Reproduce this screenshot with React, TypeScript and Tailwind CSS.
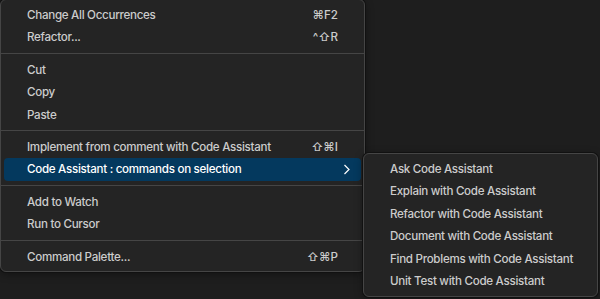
import React from "react"

type Item = { label: string; keys?: string; sub?: boolean; active?: boolean } | "sep"

const mainItems: Item[] = [
  { label: "Change All Occurrences", keys: "⌘F2" },
  { label: "Refactor...", keys: "^⇧R" },
  "sep",
  { label: "Cut" },
  { label: "Copy" },
  { label: "Paste" },
  "sep",
  { label: "Implement from comment with Code Assistant", keys: "⇧⌘I" },
  { label: "Code Assistant : commands on selection", sub: true, active: true },
  "sep",
  { label: "Add to Watch" },
  { label: "Run to Cursor" },
  "sep",
  { label: "Command Palette...", keys: "⇧⌘P" },
]

const subItems = [
  "Ask Code Assistant",
  "Explain with Code Assistant",
  "Refactor with Code Assistant",
  "Document with Code Assistant",
  "Find Problems with Code Assistant",
  "Unit Test with Code Assistant",
]

function Row({ item }: { item: Exclude<Item, "sep"> }) {
  return (
    <div
      className={
        "flex items-center h-[22.4px] px-[23px] rounded-[4px] " +
        (item.active ? "bg-[#04395e] text-white" : "text-[#cccccc]")
      }
    >
      <span className="flex-1 whitespace-nowrap pt-[1px]">{item.label}</span>
      {item.keys && <span className="whitespace-nowrap tracking-normal pt-[1px]">{item.keys}</span>}
      {item.sub && (
        <svg width="8" height="11" viewBox="0 0 8 11" className="mr-[-13px]" fill="none">
          <path d="M1.5 1 L6 5.5 L1.5 10" stroke="#ffffff" strokeWidth="1.2" />
        </svg>
      )}
    </div>
  )
}

export default function App() {
  return (
    <div
      className="relative w-[600px] h-[299px] overflow-hidden bg-[#1e1e1e] text-[11.6px] tracking-[-0.025em] font-medium"
      style={{ fontFamily: "Inter, 'DejaVu Sans', sans-serif" }}
    >
      <div className="w-[365px] mt-[-1px] bg-[#242424] border border-[#454545] rounded-[6px] pt-[4px] pb-[3px] px-[3px] shadow-[0_0_0_1px_#111111,0_2px_8px_rgba(0,0,0,0.4)]">
        {mainItems.map((item, i) =>
          item === "sep" ? (
            <div key={i} className="h-[10px] flex items-center mx-[-3px]">
              <div className="h-px w-full bg-[#454545]" />
            </div>
          ) : (
            <Row key={i} item={item} />
          )
        )}
      </div>

      <div className="absolute left-[363px] top-[153px] w-[235px] bg-[#242424] border border-[#454545] rounded-[6px] pt-[4px] pb-[4px] px-[3px] shadow-[0_0_0_1px_#111111,0_2px_8px_rgba(0,0,0,0.4)]">
        {subItems.map((s) => (
          <Row key={s} item={{ label: s }} />
        ))}
      </div>
    </div>
  )
}
